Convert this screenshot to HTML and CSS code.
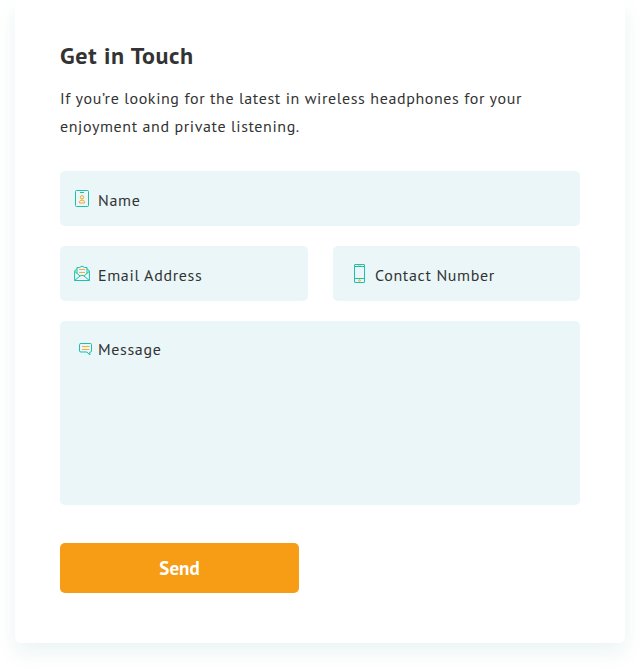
FILE: index.html
```html
<!DOCTYPE html>
<html lang="en">
<head>
<meta charset="utf-8">
<title>Get in Touch</title>
<link rel="stylesheet" href="styles.css">
</head>
<body>
<main class="card">
  <h1 class="title">Get in Touch</h1>
  <p class="intro">If you’re looking for the latest in wireless headphones for your<br>enjoyment and private listening.</p>
  <form class="form">
    <div class="field wide">
      <svg class="icon" width="18" height="20" viewBox="0 0 18 20" fill="none"><rect x="1.5" y="2.5" width="13" height="16" rx="1" stroke="#1fbfa8"/><path d="M6 4.5h4" stroke="#1fbfa8"/><circle cx="8" cy="9.3" r="1.7" stroke="#f5a623"/><path d="M5.5 15v-.8c0-1.300 1-2 2.500-2s2.500.7 2.500 2v.8z" stroke="#f5a623"/></svg>
      <span class="label">Name</span>
    </div>
    <div class="field">
      <svg class="icon" width="18" height="20" viewBox="0 0 18 20" fill="none"><path d="M3 5.500.6 8.200v9.300h14.800V8.200L13 5.500M3 10.500V4.500h2.300Q8 1.800 10.700 4.500H13v6M.6 8.200 6 13M15.400 8.200 10 13M.6 17.500 6 13q2-1.500 4 0l5.400 4.500" stroke="#1fbfa8"/><path d="M5 6.500h6M5 9.500h6" stroke="#f7ad3a"/></svg>
      <span class="label">Email Address</span>
    </div>
    <div class="field phone-field">
      <svg class="icon" width="14" height="22" viewBox="0 0 14 22" fill="none"><rect x="1.500" y="2.500" width="10" height="18" rx=".5" stroke="#1fbfa8"/><path d="M1.500 4.500h10M1.500 16.500h10" stroke="#1fbfa8"/><path d="M5 3.500h3" stroke="#f5a623" stroke-opacity=".6" stroke-width=".8"/><circle cx="6.500" cy="18.500" r=".9" stroke="#f5a623"/></svg>
      <span class="label phone">Contact Number</span>
    </div>
    <div class="field wide message-field">
      <svg class="icon" width="14" height="16" viewBox="0 0 14 16" fill="none"><path d="M2 2.500h9.500q1 0 1 1v6.500q0 1-1 1h-.7v3L8 11H2q-1.500 0-1.500-1V3.500q0-1 1.500-1z" stroke="#1fbfa8"/><path d="M3 5.500h7.500M3 8.500h7.500" stroke="#f7ad3a"/></svg>
      <span class="label message">Message</span>
    </div>
    <button class="send" type="button">Send</button>
  </form>
</main>
</body>
</html>
```
FILE: styles.css
```css
* { box-sizing: border-box; }
body {
  margin: 0;
  padding: 0 15px 25px;
  background: #fff;
  color: #333;
  font-family: "PT Sans", "Noto Sans", sans-serif;
  font-size: 16px;
  letter-spacing: .6px;
}
.card {
  height: 643px;
  padding: 38px 45px 0;
  background: #fff;
  border-radius: 6px;
  box-shadow: 0 10px 20px rgba(46, 128, 136, .09);
}
.title {
  margin: 0;
  font-size: 24px;
  line-height: 36px;
  letter-spacing: .67px;
  white-space: nowrap;
}
.intro {
  margin: 10px 0 0;
  line-height: 28px;
  white-space: nowrap;
}
.form {
  display: grid;
  grid-template-columns: 248px 247px;
  gap: 20px 25px;
  margin-top: 31px;
}
.field {
  display: flex;
  height: 55px;
  padding: 17px 14px 0;
  background: #eaf6f8;
  border-radius: 5px;
  white-space: nowrap;
}
.wide { grid-column: 1 / -1; }
.icon { flex: none; }
.label {
  margin: -1px 0 0 6px;
  line-height: 26px;
  letter-spacing: .65px;
}
.phone-field { padding: 16px 20px 0; }
.phone { margin: 0 0 0 8px; }
.message-field {
  height: 184px;
  padding: 20px 19px 0;
}
.message { margin: -5px 0 0 5px; }
.send {
  width: 239px;
  height: 50px;
  margin-top: 18px;
  padding: 0;
  border: 0;
  border-radius: 5px;
  background: #f69c15;
  color: #fff;
  font: bold 19px/50px "PT Sans", "Noto Sans", sans-serif;
  letter-spacing: 0;
}
```
